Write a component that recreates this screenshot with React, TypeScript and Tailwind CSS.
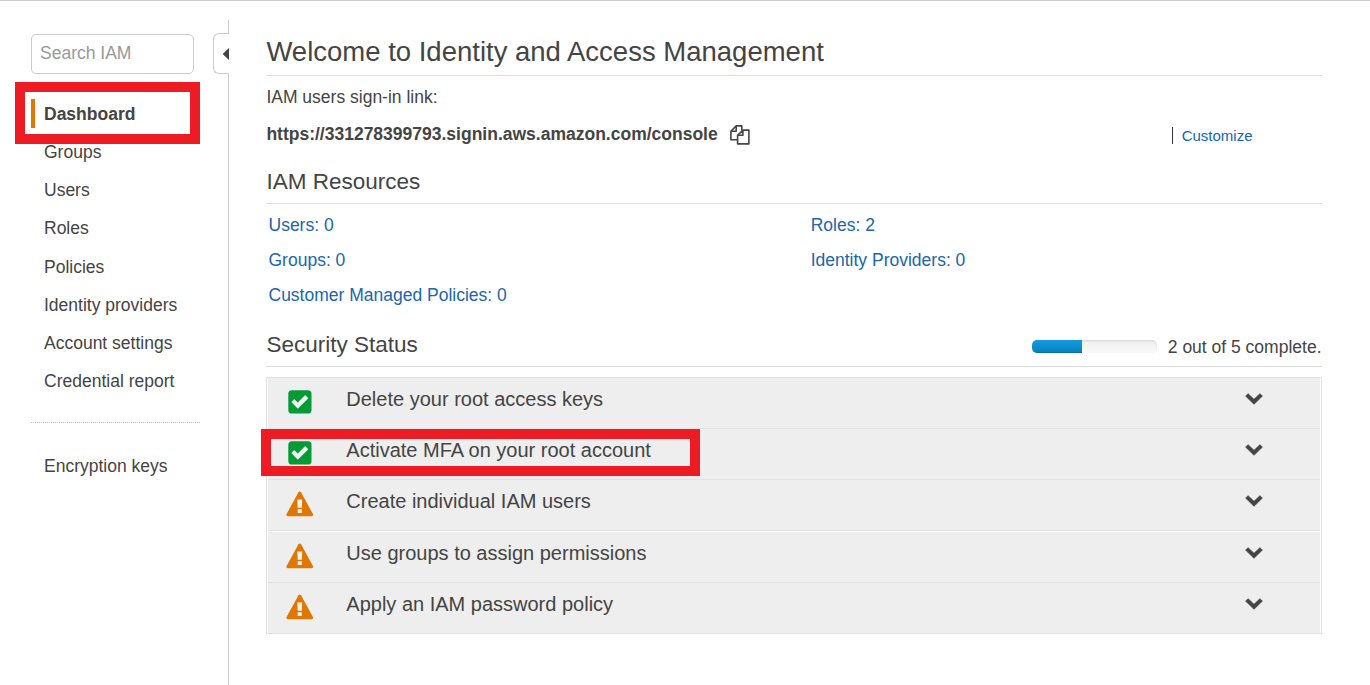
const navItems = [
  'Groups',
  'Users',
  'Roles',
  'Policies',
  'Identity providers',
  'Account settings',
  'Credential report',
];

const tasks = [
  { label: 'Delete your root access keys', done: true, row: 'h-[50px]' },
  { label: 'Activate MFA on your root account', done: true, row: 'h-[51px] border-t', highlighted: true },
  { label: 'Create individual IAM users', done: false, row: 'h-[51px] border-t' },
  {
    label: 'Use groups to assign permissions',
    done: false,
    row: 'h-[52px] border-t pt-px shadow-[inset_0_1px_0_#fff]',
  },
  { label: 'Apply an IAM password policy', done: false, row: 'h-[51px] border-t' },
];

function CheckIcon() {
  return (
    <svg className="mt-[12px] ml-[20px] block" width="24" height="24" viewBox="0 0 24 24">
      <rect x="0.3" y="0.3" width="23.2" height="23.2" rx="3.6" fill="#049a35" />
      <path
        d="M3.6 12.1 6.3 9.3 9.8 12.8 17.2 5.3 20.2 8.2 9.8 18.4Z"
        fill="#f1f1f1"
        stroke="#f1f1f1"
        strokeWidth="0.4"
        strokeLinejoin="round"
      />
    </svg>
  );
}

function WarningIcon() {
  return (
    <svg className="mt-[11px] ml-[18px] block" width="27.5" height="26" viewBox="0 0 28 26">
      <path d="M12.7 1.1Q14-.6 15.3 1.1L27.4 23.2Q28.2 25.3 26.2 25.5H1.8Q-.2 25.3.6 23.2Z" fill="#e07700" />
      <path d="M11.5 8.4h5l-.4 8.4h-4.2ZM11.9 18.4h4.2v3.8h-4.2Z" fill="#f1f1f1" />
    </svg>
  );
}

function ChevronIcon() {
  return (
    <svg width="18" height="12" viewBox="0 0 18 12">
      <path
        d="M.6 3.1 3.1.7 9 6.3 14.9.7 17.4 3.1 9 11.3Z"
        fill="#444"
        stroke="#444"
        strokeWidth="0.7"
        strokeLinejoin="round"
      />
    </svg>
  );
}

function CopyIcon() {
  return (
    <svg
      className="mt-px block"
      width="20"
      height="20"
      viewBox="0 0 20 20"
      fill="none"
      stroke="#444"
      strokeWidth="1.6"
      strokeLinejoin="round"
    >
      <path d="M7.4 14.8H.9V6.3L6.2.9h5.6v4.6M6.2.9v5.4H.9" />
      <path d="M12.9 5.1h6v13.8H7.6V10.3Zm0 0v5.2H7.6" />
    </svg>
  );
}

function Sidebar() {
  return (
    <aside className="flex w-[228px] shrink-0 flex-col pt-[14px] pl-[31px]">
      <div className="flex h-10">
        <input
          className="h-10 w-[163px] shrink-0 rounded-[5px] border border-[#ccc] px-2 pb-px text-[17.5px] outline-none placeholder:text-[#999]"
          placeholder="Search IAM"
        />
        <button className="relative -mt-px ml-[19px] flex h-[41px] w-4 shrink-0 items-center justify-end rounded-l-[6px] border border-r-0 border-[#ccc] bg-white">
          <svg width="7" height="12" viewBox="0 0 7 12">
            <path d="M7 0v12L.6 6Z" fill="#444" />
          </svg>
        </button>
      </div>
      <nav className="mt-[21px]">
        <div className="relative flex h-[38px] items-center pl-[13px] font-bold">
          <span className="absolute top-1 left-0 h-[29px] w-1 bg-[#e07700]" />
          Dashboard
          <span className="pointer-events-none absolute -top-[13px] -left-4 h-[62px] w-[185px] border-10 border-[#ed1c24]" />
        </div>
        {navItems.map((item) => (
          <a key={item} className="flex h-[38.2px] items-center pl-[13px]">
            {item}
          </a>
        ))}
      </nav>
      <div className="mt-[22px] w-[169px] border-t border-dotted border-[#bbb]" />
      <a className="mt-6 flex h-[38px] items-center pl-[13px]">Encryption keys</a>
    </aside>
  );
}

export default function App() {
  return (
    <div className="flex h-[685px] w-[1370px] overflow-hidden border-t border-[#ccc] bg-white pt-[19px] font-['Liberation_Sans',Arial,sans-serif] text-[17.5px] leading-6 text-[#444]">
      <Sidebar />
      <main className="flex-1 border-l border-[#ccc] pt-2 pr-12 pl-[37px]">
        <h1 className="flex h-12 items-center border-b border-[#ddd] pl-[0.4px] text-[27.5px]">
          Welcome to Identity and Access Management
        </h1>
        <p className="flex h-[42px] items-center pl-[0.4px]">IAM users sign-in link:</p>
        <div className="flex h-8 items-center pl-[0.4px]">
          <strong>https://331278399793.signin.aws.amazon.com/console</strong>
          <span className="ml-3">
            <CopyIcon />
          </span>
          <a className="mt-[3px] mr-[69.5px] ml-auto flex items-center text-[15px] text-[#1166bb]">
            <span className="mr-[9px] h-[17px] w-px bg-[#334]" />
            Customize
          </a>
        </div>
        <h2 className="mt-[11px] flex h-[43px] items-center border-b border-[#ddd] pl-[0.4px] text-[22.5px]">
          IAM Resources
        </h2>
        <div className="grid grid-cols-[542.2px_1fr] pt-[3px] pl-[2.5px] text-[#2166a8]">
          <a className="flex h-[35px] items-center">Users: 0</a>
          <a className="flex h-[35px] items-center">Roles: 2</a>
          <a className="flex h-[35px] items-center">Groups: 0</a>
          <a className="flex h-[35px] items-center">Identity Providers: 0</a>
          <a className="flex h-[35px] items-center">Customer Managed Policies: 0</a>
        </div>
        <div className="mt-3 flex h-[43px] items-center border-b border-[#ddd] pl-[0.4px]">
          <h2 className="text-[22.5px]">Security Status</h2>
          <div className="mt-[3px] ml-auto flex h-[13px] w-[125px] overflow-hidden rounded-[5px] bg-gradient-to-b from-[#eee] to-[#f9f9f9] shadow-[inset_0_1px_2px_rgba(0,0,0,0.1)]">
            <div className="w-[40%] bg-gradient-to-b from-[#149bdf] to-[#0480be] shadow-[inset_0_-1px_0_rgba(0,0,0,0.15)]" />
          </div>
          <span className="mt-1 mr-[0.5px] ml-[10.5px]">2 out of 5 complete.</span>
        </div>
        <ul className="mt-[10px] w-[1056px] border border-[#e2e2e2]">
          {tasks.map((task) => (
            <li key={task.label} className={`relative mx-px flex border-[#e2e2e2] bg-[#eee] ${task.row}`}>
              <span className="w-[78.3px]">{task.done ? <CheckIcon /> : <WarningIcon />}</span>
              <span className="mt-[9px] text-[20px]">{task.label}</span>
              <span className="mt-[15px] mr-[57.2px] ml-auto">
                <ChevronIcon />
              </span>
              {task.highlighted && (
                <span className="pointer-events-none absolute top-0 -left-[7px] h-[47px] w-[439px] border-10 border-[#ed1c24]" />
              )}
            </li>
          ))}
        </ul>
      </main>
    </div>
  );
}
